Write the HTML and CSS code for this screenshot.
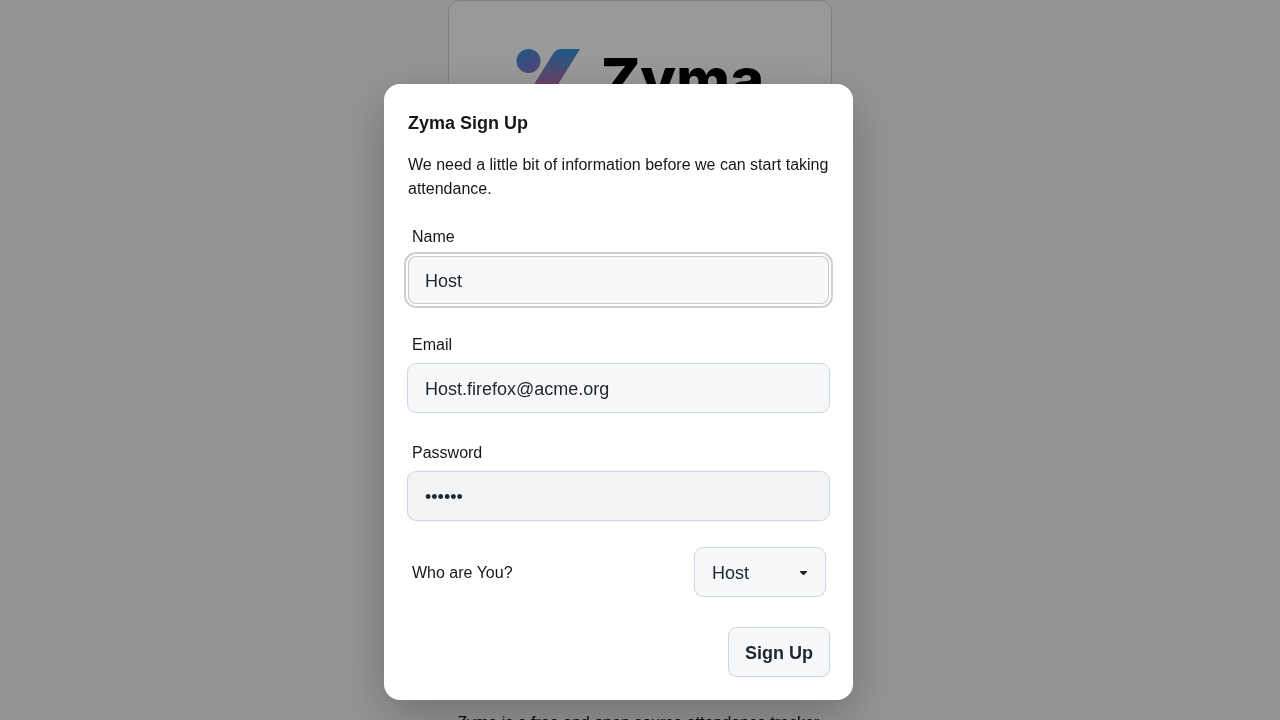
FILE: index.html
```html
<!DOCTYPE html>
<html lang="en">
<head>
<meta charset="utf-8">
<meta name="viewport" content="width=device-width, initial-scale=1">
<title>Zyma Sign Up</title>
<link rel="stylesheet" href="styles.css">
</head>
<body>
<main class="page">
  <section class="card">
    <div class="brand">
      <svg class="brand-mark" viewBox="0 0 64 64" aria-hidden="true">
        <defs>
          <linearGradient id="dot" x1="0.2" y1="0" x2="0.8" y2="1">
            <stop offset="0" stop-color="#3494dc"/>
            <stop offset="1" stop-color="#9470cc"/>
          </linearGradient>
          <linearGradient id="slash" x1="0.5" y1="0" x2="0.4" y2="1">
            <stop offset="0" stop-color="#3494dc"/>
            <stop offset="0.55" stop-color="#b86cac"/>
            <stop offset="1" stop-color="#f0648c"/>
          </linearGradient>
        </defs>
        <circle cx="12.5" cy="12" r="12" fill="url(#dot)"/>
        <path d="M46 0H64L28 58Q24 64 18 64H0L37 5Q40 0 46 0Z" fill="url(#slash)"/>
      </svg>
      <span class="brand-name">Zyma</span>
    </div>
  </section>
  <p class="tagline">Zyma is a free and open source attendance tracker.</p>
</main>
<div class="backdrop">
  <form class="dialog" role="dialog" aria-labelledby="title">
    <h1 class="dialog-title" id="title">Zyma Sign Up</h1>
    <p class="dialog-text">We need a little bit of information before we can start taking attendance.</p>
    <div class="field">
      <label class="label" for="name">Name</label>
      <input class="control input input-active" id="name" type="text" value="Host">
    </div>
    <div class="field">
      <label class="label" for="email">Email</label>
      <input class="control input" id="email" type="email" value="Host.firefox@acme.org">
    </div>
    <div class="field">
      <label class="label" for="password">Password</label>
      <input class="control input input-password" id="password" type="password" value="secret">
    </div>
    <div class="choice">
      <label class="choice-label" for="role">Who are You?</label>
      <div class="select-wrap">
        <select class="control select" id="role">
          <option>Host</option>
          <option>Attendee</option>
        </select>
        <svg class="caret" viewBox="0 0 7 4" aria-hidden="true"><path d="M0 0H7V1L4 4H3L0 1Z" fill="#1f2328"/></svg>
      </div>
    </div>
    <div class="actions">
      <button class="control button" type="button">Sign Up</button>
    </div>
  </form>
</div>
</body>
</html>
```
FILE: styles.css
```css
* {
  box-sizing: border-box;
}

body {
  margin: 0;
  overflow: hidden;
  background: #f6f7f9;
  color: #15171a;
  font: 16px/24px "Liberation Sans", Arial, sans-serif;
}

.page {
  display: flex;
  flex-direction: column;
  align-items: center;
  min-height: 100vh;
}

.card {
  width: 30%;
  min-height: 640px;
  padding: 48px 24px;
  border: 1px solid #cdd4df;
  border-radius: 12px;
  background: #fff;
}

.brand {
  display: flex;
  justify-content: center;
  gap: 21px;
}

.brand-mark {
  width: 64px;
  height: 64px;
}

.brand-name {
  color: #000;
  font: 800 58px/60px Inter, sans-serif;
}

.tagline {
  margin: 71px 0 0;
  white-space: nowrap;
}

.backdrop {
  position: fixed;
  inset: 0;
  padding: 84px 0 20px 30%;
  background: rgba(0, 0, 0, 0.4);
}

.dialog {
  width: 469px;
  max-width: 100%;
  padding: 25px 24px 24px;
  border-radius: 16px;
  background: #fff;
  box-shadow: 0 16px 48px rgba(0, 0, 0, 0.25);
}

.dialog-title {
  margin: 0;
  font-size: 18px;
  line-height: 28px;
}

.dialog-text {
  margin: 16px 0 18px;
}

.field {
  display: flex;
  flex-direction: column;
  margin-bottom: 23px;
}

.label {
  padding: 8px 4px 9px;
  line-height: 20px;
}

.choice-label {
  padding: 2px 4px 0;
}

.control {
  height: 48px;
  margin: 0;
  padding: 2px 17px 0;
  border: 0;
  border-radius: 8px;
  outline: 0;
  background: #f7f8fa;
  box-shadow: 0 0 0 1px #cdd5e0;
  color: #23272f;
  font: 18px/28px "Liberation Sans", Arial, sans-serif;
}

.input {
  width: 100%;
}

.input-active {
  box-shadow: inset 0 0 0 1px #c8c9cb, 0 0 0 2px #fff, 0 0 0 4px #d0d0d0;
}

.input-password {
  background: #f2f3f5;
}

.choice {
  display: flex;
  align-items: center;
  justify-content: space-between;
  padding: 5px 4px 4px 0;
}

.select-wrap {
  position: relative;
}

.select {
  display: block;
  width: 130px;
  appearance: none;
}

.caret {
  position: absolute;
  top: 23px;
  right: 18px;
  width: 7px;
  height: 4px;
  pointer-events: none;
}

.actions {
  display: flex;
  justify-content: flex-end;
  margin-top: 28px;
}

.button {
  padding: 2px 16px 0;
  font-weight: 700;
  box-shadow: 0 0 0 1px #cdd5e0, 0 1px 3px rgba(0, 0, 0, 0.08);
}
```
